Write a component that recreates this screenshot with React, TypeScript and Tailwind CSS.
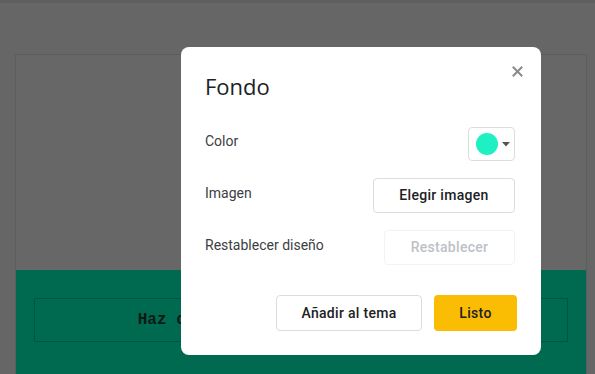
import React from "react";

export default function App() {
  return (
    <div className="relative w-[595px] h-[374px] overflow-hidden bg-[#666666]">
      <div className="h-[3px] w-full bg-[#5f5f5f]" />
      <div className="ml-[15px] mt-[51px] w-[572px] h-[330px] border border-[#5d5d5d] flex flex-col">
        <div className="h-[215px] bg-[#676767]" />
        <div className="flex-1 bg-[#006a50] px-[18px] pt-[28px]">
          <div className="h-[44px] border border-[#00563f] flex items-center justify-center">
            <span
              className="text-[16px] font-bold text-[#0d1a14]"
              style={{ fontFamily: '"Liberation Mono", monospace' }}
            >
              Haz clic para editar el encabezado
            </span>
          </div>
        </div>
      </div>

      <div
        className="absolute left-[181px] top-[47px] w-[360px] h-[308px] bg-white rounded-[8px] pl-[24px] pr-[26px]"
        style={{ fontFamily: "Roboto, 'Open Sans', sans-serif" }}
      >
        <button className="absolute right-[18px] top-[18px] w-[12px] h-[12px] flex items-center justify-center">
          <svg width="11" height="11" viewBox="0 0 11 11">
            <path d="M1.5 1.5 L9.5 9.5 M9.5 1.5 L1.5 9.5" stroke="#8a8a8a" strokeWidth="2" strokeLinecap="square" />
          </svg>
        </button>
        <div
          className="pt-[24px] text-[22px] leading-[30px] text-[#202124]"
          style={{ fontFamily: "'Open Sans', sans-serif" }}
        >
          Fondo
        </div>
        <div className="mt-[26px] flex flex-col gap-[17px]">
          <div className="flex items-center justify-between h-[34px]">
            <span className="text-[14px] text-[#3c4043] pb-[5px]">Color</span>
            <div className="w-[47px] h-[34px] border border-[#dadce0] rounded-[4px] flex items-center pl-[7px] gap-[4px]">
              <div className="w-[22px] h-[22px] rounded-full bg-[#1ef0c2]" />
              <svg width="8" height="5" viewBox="0 0 8 5">
                <path d="M0 0 L8 0 L4 4.5 Z" fill="#555" />
              </svg>
            </div>
          </div>
          <div className="flex items-center justify-between h-[35px]">
            <span className="text-[14px] text-[#3c4043] pb-[5px]">Imagen</span>
            <div className="w-[142px] h-[35px] border border-[#dadce0] rounded-[4px] flex items-center justify-center text-[14px] font-medium text-[#202124] tracking-[0.3px]">
              Elegir imagen
            </div>
          </div>
          <div className="flex items-center justify-between h-[35px]">
            <span className="text-[14px] text-[#3c4043] pb-[5px]">Restablecer diseño</span>
            <div className="w-[131px] h-[35px] border border-[#f1f3f4] rounded-[4px] flex items-center justify-center text-[14px] font-medium text-[#bdc1c6] tracking-[0.3px]">
              Restablecer
            </div>
          </div>
        </div>
        <div className="mt-[30px] flex justify-end gap-[12px] -mr-[2px]">
          <div className="w-[146px] h-[36px] border border-[#dadce0] rounded-[4px] flex items-center justify-center text-[14px] font-medium text-[#202124] tracking-[0.3px]">
            Añadir al tema
          </div>
          <div className="w-[83px] h-[36px] bg-[#fbbc04] rounded-[4px] flex items-center justify-center text-[14px] font-medium text-[#202124] tracking-[0.3px]">
            Listo
          </div>
        </div>
      </div>
    </div>
  );
}
